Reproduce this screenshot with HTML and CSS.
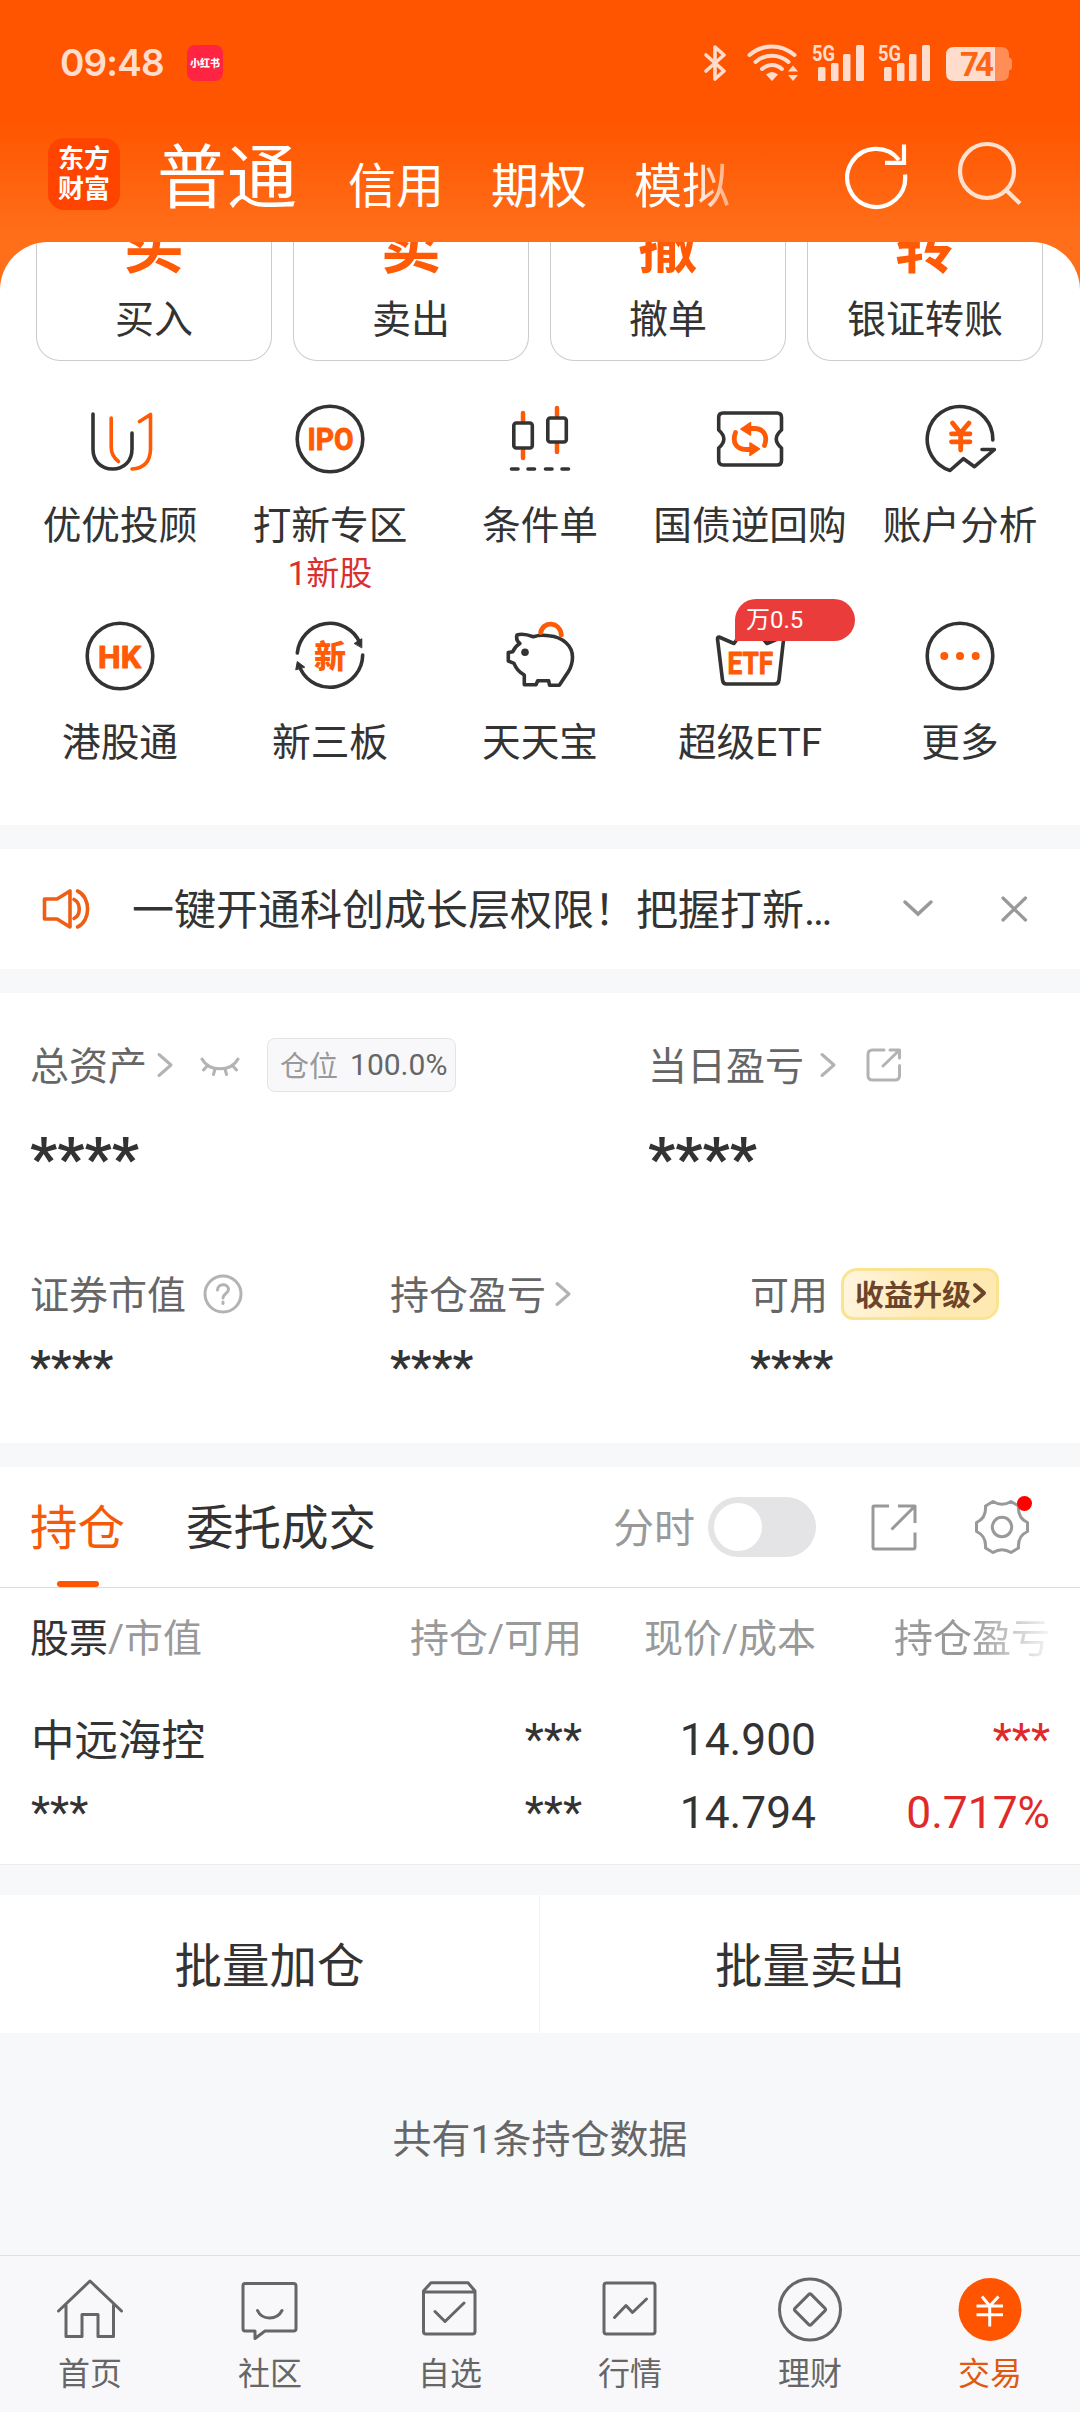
FILE: index.html
```html
<!DOCTYPE html>
<html lang="zh-CN">
<head>
<meta charset="utf-8">
<title>交易</title>
<link rel="stylesheet" href="styles.css">
</head>
<body>
<div class="screen">
  <header class="header">
    <div class="status">
      <span class="clock">09:48</span>
      <span class="note-app">小红书</span>
      <svg class="status-icons" width="320" height="40" viewBox="0 0 320 40">
        <g fill="none" stroke="#ffdccb" stroke-width="4" stroke-linecap="round" stroke-linejoin="round">
          <path d="M6 12 L24 28 L15 36 V4 L24 12 L6 28" stroke-width="3.600"/>
          <path d="M49.500 12 C63 0.500 81 0.500 94.500 12"/>
          <path d="M55.500 19 C65 10.500 79 10.500 88.500 19"/>
          <path d="M62 26 C68 20.500 76 20.500 82 26"/>
        </g>
        <g fill="#ffdccb">
          <path d="M72 38 L66 31.500 Q72 26.500 78 31.500 Z"/>
          <path d="M93 22.500 L98 28.500 H88 Z M93 38 L98 32 H88 Z"/>
          <text class="net" x="112" y="17.500" textLength="23" lengthAdjust="spacingAndGlyphs">5G</text>
          <rect x="118" y="24" width="7.500" height="14" rx="1.500"/>
          <rect x="131" y="20" width="7.500" height="18" rx="1.500"/>
          <rect x="143" y="11" width="7.500" height="27" rx="1.500"/>
          <rect x="156" y="2" width="8" height="36" rx="1.500"/>
          <text class="net" x="178" y="17.500" textLength="23" lengthAdjust="spacingAndGlyphs">5G</text>
          <rect x="184" y="24" width="7.500" height="14" rx="1.500"/>
          <rect x="197" y="20" width="7.500" height="18" rx="1.500"/>
          <rect x="209" y="11" width="7.500" height="27" rx="1.500"/>
          <rect x="222" y="2" width="8" height="36" rx="1.500"/>
          <path d="M254 4 H295 V38 H254 Q246 38 246 30 V12 Q246 4 254 4 Z"/>
        </g>
        <path d="M295 4 H301 Q309 4 309 12 V14.500 Q312 15 312 18 V24 Q312 27 309 27.500 V30 Q309 38 301 38 H295 Z" fill="#ff8d55"/>
        <text class="battery" x="260" y="32.500" textLength="34">74</text>
      </svg>
    </div>
    <div class="topbar">
      <div class="logo"><span>东方</span><span>财富</span></div>
      <nav class="modes">
        <span class="mode mode-active">普通</span>
        <span class="mode">信用</span>
        <span class="mode">期权</span>
        <span class="mode mode-fade">模拟</span>
      </nav>
      <svg class="refresh" width="72" height="72" viewBox="0 0 72 72" fill="none" stroke="#fff" stroke-width="4.200">
        <path d="M65 35.500 A29 29 0 1 1 59 21"/>
        <path d="M64 5.500 V23.800 H45"/>
      </svg>
      <svg class="search" width="72" height="72" viewBox="0 0 72 72" fill="none" stroke="#ffe1d0" stroke-width="4.200">
        <circle cx="34" cy="32" r="27"/>
        <path d="M52.500 50.500 L67 64.500"/>
      </svg>
    </div>
  </header>

  <div class="sheet">
    <section class="quick">
      <div class="cards">
        <div class="card"><b>买</b><span>买入</span></div>
        <div class="card"><b>卖</b><span>卖出</span></div>
        <div class="card"><b>撤</b><span>撤单</span></div>
        <div class="card"><b>转</b><span>银证转账</span></div>
      </div>
      <div class="tools">
        <div class="tool">
          <svg class="icon" viewBox="0 0 72 72">
            <path d="M9 11 V46 C9 58 17 66 28.500 66 C40 66 48 58 48 46 V30"/>
            <path class="hot" d="M27.200 15 V44 Q27.200 53 34.500 58.500 M55.500 18.500 L66.500 11.500 V46 Q66 65 48 66"/>
          </svg>
          <span>优优投顾</span>
        </div>
        <div class="tool">
          <svg class="icon" viewBox="0 0 72 72">
            <circle cx="36" cy="36" r="32.800"/>
            <text class="mark" x="13.500" y="47" textLength="46" lengthAdjust="spacingAndGlyphs">IPO</text>
          </svg>
          <span>打新专区</span><em>1新股</em>
        </div>
        <div class="tool">
          <svg class="icon" viewBox="0 0 72 72">
            <path class="hot candle" d="M19 10 V18 M19 47 V55 M53 5 V13 M53 41 V49"/>
            <rect x="9.800" y="20" width="18.500" height="25" rx="2.500"/>
            <rect x="43.800" y="15" width="18.500" height="24" rx="2.500"/>
            <path d="M7.500 66 H14 M24 66 H30.500 M41.500 66 H48 M58 66 H64.500"/>
          </svg>
          <span>条件单</span>
        </div>
        <div class="tool">
          <svg class="icon" viewBox="0 0 72 72">
            <path d="M9 10 H63 Q67.500 10 67.500 14.500 V27 Q57 36 67.500 45 V57.500 Q67.500 62 63 62 H9 Q4.700 62 4.700 57.500 V45 Q15 36 4.700 27 V14.500 Q4.700 10 9 10 Z"/>
            <path class="hot bold" d="M35 25.500 H40 C50 25.500 54 33 50.500 42.500 M37 46.500 H32 C22 46.500 18 39 21.500 29.500"/>
            <path class="solid" d="M27 26 L36.500 19.500 V32 Z M45.500 46 L36 40 V52.500 Z"/>
          </svg>
          <span>国债逆回购</span>
        </div>
        <div class="tool">
          <svg class="icon" viewBox="0 0 72 72">
            <path d="M68.800 37 A32.800 32.800 0 1 0 26 67.500 L39.500 55.700 L50.500 63.700 L70.500 46.500 H58"/>
            <path class="hot bold" d="M28.500 20 L36.500 30 L45 20 M27.500 30.800 H46 M27.500 38.800 H46 M36.700 30 V47"/>
          </svg>
          <span>账户分析</span>
        </div>
        <div class="tool">
          <svg class="icon" viewBox="0 0 72 72">
            <circle cx="36" cy="36" r="32.800"/>
            <text class="mark" x="14" y="47.500" textLength="43" lengthAdjust="spacingAndGlyphs">HK</text>
          </svg>
          <span>港股通</span>
        </div>
        <div class="tool">
          <svg class="icon" viewBox="0 0 72 72">
            <path d="M3.300 33 A32.800 32.800 0 0 1 66 23 M68.700 35 A32.800 32.800 0 0 1 6.500 49"/>
            <path class="head" d="M60.500 23.300 L67.800 18.700 V27.500 Z M1.800 49.500 L3.300 41.500 L10.500 47 Z"/>
            <text class="mark mark-cn" x="20" y="47.500">新</text>
          </svg>
          <span>新三板</span>
        </div>
        <div class="tool">
          <svg class="icon" viewBox="0 0 72 72">
            <path d="M13 15 Q19 13 29.300 16.700 Q36 14.500 45 15.700 C59 17 68.500 26 68.500 37 Q68.500 45 64.300 51.700 L55.300 65.300 H45.500 L44.700 60.700 H33.700 L32 64.700 H20.300 V55 Q13 51 10 43.300 L4.300 41 V32.500 L8.700 31.700 Q11 26.500 15.800 23.500 Q11.500 20 13 15 Z"/>
            <circle class="dark" cx="21" cy="32.300" r="3.800"/>
            <path class="hot bold" d="M36.700 12.500 C39 1 56 1 57.300 15"/>
          </svg>
          <span>天天宝</span>
        </div>
        <div class="tool">
          <svg class="icon" viewBox="0 0 72 72">
            <path d="M5 17 L20 23.500 L26 15 H46 L53 23.500 L68 17 Q69.500 18 69.500 20 L65 60 Q64.500 64 61 64 H12.500 Q9 64 8.500 60 L3.500 19 Q3.500 17 5 17 Z"/>
            <text class="mark" x="13.500" y="54" textLength="45.500" lengthAdjust="spacingAndGlyphs">ETF</text>
          </svg>
          <span>超级ETF</span>
          <i class="flag">万0.5</i>
        </div>
        <div class="tool">
          <svg class="icon" viewBox="0 0 72 72">
            <circle cx="36" cy="36" r="32.800"/>
            <path class="dots" d="M16.300 36 a4 4 0 1 0 8 0 a4 4 0 1 0 -8 0 M32 36 a4 4 0 1 0 8 0 a4 4 0 1 0 -8 0 M47.700 36 a4 4 0 1 0 8 0 a4 4 0 1 0 -8 0"/>
          </svg>
          <span>更多</span>
        </div>
      </div>
    </section>
  </div>

  <section class="notice">
    <svg width="50" height="46" viewBox="0 0 50 46" fill="none" stroke="#ee5e14" stroke-width="3.600" stroke-linecap="round" stroke-linejoin="round">
      <path d="M4.500 13 H17 L30 5 V41 L17 33 H4.500 Z"/>
      <path d="M34 13.500 C41 17 41 29 34 32.500 M37.500 5 C51 11 51 35 37.500 41"/>
    </svg>
    <p>一键开通科创成长层权限！把握打新…</p>
    <svg class="down" width="34" height="22" viewBox="0 0 34 22" fill="none" stroke="#999" stroke-width="3.500" stroke-linecap="round"><path d="M4 4 L17 16 L30 4"/></svg>
    <svg width="30" height="30" viewBox="0 0 30 30" fill="none" stroke="#999" stroke-width="3.200" stroke-linecap="round"><path d="M3 4 L25.500 26 M25.500 4 L3 26"/></svg>
  </section>

  <section class="assets">
    <div class="total">
      <div class="metric">
        <div class="label"><span>总资产</span><svg class="chev" width="18" height="26" viewBox="0 0 18 26"><path d="M3 2.500 L15 13 L3 23.500"/></svg>
          <svg class="eye" width="40" height="22" viewBox="0 0 40 22"><path d="M2 3 C9 16 31 16 38 3 M8 9 L3.500 14 M15 13 L13.500 18.500 M25 13 L26.500 18.500 M32 9 L36.500 14"/></svg>
          <div class="ratio">仓位<b>100.0%</b></div></div>
        <div class="stars-lg">****</div>
      </div>
      <div class="metric">
        <div class="label"><span>当日盈亏</span><svg class="chev chev-far" width="18" height="26" viewBox="0 0 18 26"><path d="M3 2.500 L15 13 L3 23.500"/></svg>
          <svg class="share" width="36" height="36" viewBox="0 0 36 36"><path d="M18 3 H6.500 Q2 3 2 7.500 V28.500 Q2 33 6.500 33 H29 Q33.500 33 33.500 28.500 V18.500 M24 3 H33.500 V11 M33 3.500 L17 19"/></svg></div>
        <div class="stars-lg">****</div>
      </div>
    </div>
    <div class="detail">
      <div class="metric">
        <div class="label"><span>证券市值</span><svg class="help" width="40" height="40" viewBox="0 0 40 40"><circle cx="20" cy="20" r="18"/><path d="M14.500 16 C14.500 9 25.500 9 25.500 15.500 C25.500 19.500 20 19.500 20 24 M20 28 V29.500"/></svg></div>
        <div class="stars">****</div>
      </div>
      <div class="metric">
        <div class="label"><span>持仓盈亏</span><svg class="chev chev-near" width="18" height="26" viewBox="0 0 18 26"><path d="M3 2.500 L15 13 L3 23.500"/></svg></div>
        <div class="stars">****</div>
      </div>
      <div class="metric">
        <div class="label"><span>可用</span><div class="upgrade">收益升级<svg width="15" height="22" viewBox="0 0 15 22"><path d="M3 3 L12 11 L3 19"/></svg></div></div>
        <div class="stars">****</div>
      </div>
    </div>
  </section>

  <section class="holdings">
    <div class="tabs">
      <span class="tab tab-active">持仓</span>
      <span class="tab">委托成交</span>
      <span class="switch-label">分时</span>
      <span class="switch"></span>
      <svg class="export" width="48" height="48" viewBox="0 0 48 48"><path d="M19 3 H4 Q3 3 3 4 V44 Q3 46 5 46 H43 Q45 46 45 44 V29.500 M28 3 H45 V20 M44.500 3.500 L21.500 26.500"/></svg>
      <div class="gear">
        <svg width="60" height="60" viewBox="0 0 60 60"><circle cx="30" cy="30" r="9.700"/><path d="M21 4.500 Q30 10 39 4.500 L46.500 9 Q45.500 21 55.500 25.500 V34.500 Q45.500 39 46.500 51 L39 55.500 Q30 50 21 55.500 L13.500 51 Q14.500 39 4.500 34.500 V25.500 Q14.500 21 13.500 9 Z"/></svg>
        <i></i>
      </div>
    </div>
    <div class="table">
      <div class="row head-row">
        <span><b>股票</b>/市值</span><span>持仓/可用</span><span>现价/成本</span><span class="fade">持仓盈亏</span>
      </div>
      <div class="row">
        <span class="name">中远海控</span><span>***</span><span>14.900</span><span class="up">***</span>
      </div>
      <div class="row">
        <span>***</span><span>***</span><span>14.794</span><span class="up">0.717%</span>
      </div>
    </div>
  </section>

  <section class="actions"><span>批量加仓</span><span>批量卖出</span></section>
  <p class="summary">共有1条持仓数据</p>

  <nav class="dock">
    <div class="dock-item"><svg viewBox="0 0 72 72"><path d="M4.500 37 L36 7 L67.500 37 M12 31 V62.500 H28 V40.500 H44 V62.500 H59.500 V31"/></svg><span>首页</span></div>
    <div class="dock-item"><svg viewBox="0 0 72 72"><path d="M11 9.500 H59.500 Q62 9.500 62 12 V54.500 Q62 57 59.500 57 H31 L21 64.500 V57 H11 Q9 57 9 54.500 V12 Q9 9.500 11 9.500 Z M23.500 36.500 C28 46.500 43 46.500 48 36.500"/></svg><span>社区</span></div>
    <div class="dock-item"><svg viewBox="0 0 72 72"><path d="M17 8.800 H54 L61 17 V57.500 Q61 60 58.500 60 H12 Q9.500 60 9.500 57.500 V17 Z M9.500 18 H61 M21 37.500 L31 47.500 L50 29"/></svg><span>自选</span></div>
    <div class="dock-item"><svg viewBox="0 0 72 72"><rect x="10" y="9" width="51" height="51" rx="2.500"/><path d="M20.500 43.500 L32 31.500 L38.500 38.500 L52.500 25"/></svg><span>行情</span></div>
    <div class="dock-item"><svg viewBox="0 0 72 72"><circle cx="36" cy="35.500" r="30.500"/><rect x="24.500" y="24" width="23" height="23" rx="2" transform="rotate(45 36 35.500)"/></svg><span>理财</span></div>
    <div class="dock-item dock-active"><svg viewBox="0 0 72 72"><circle cx="36" cy="35.500" r="31.500"/><path d="M28 22.500 L35.700 32 L44.500 22.500 M22.500 32 H49 M22.500 40.800 H49 M35.700 32 V52.500"/></svg><span>交易</span></div>
  </nav>
</div>
</body>
</html>
```

FILE: styles.css
```css
* { box-sizing: border-box; }

body {
  margin: 0;
  background: #f7f8fa;
  color: #333;
  font-family: Roboto, "Noto Sans CJK SC", sans-serif;
}

p { margin: 0; }

em, i { font-style: normal; }

svg { display: block; flex: none; }

.screen {
  width: 1080px;
  height: 2412px;
  display: flex;
  flex-direction: column;
  overflow: hidden;
}

/* Header */
.header {
  height: 242px;
  background: linear-gradient(#ff5500 50%, #ff6e19 96%);
}

.status {
  height: 124px;
  padding: 2px 60px 0 60px;
  display: flex;
  align-items: center;
  color: #ffdccb;
}

.clock {
  width: 127px;
  font: 600 37px/40px Inter, sans-serif;
  letter-spacing: -0.9px;
}

.note-app {
  width: 36px;
  height: 36px;
  border-radius: 8px;
  background: #ff2442;
  color: #fff;
  font: 900 10px/36px "Noto Sans CJK SC", sans-serif;
  text-align: center;
}

.status-icons { margin-left: 477px; }

.net { font: 700 22px Roboto, sans-serif; }

.battery { font: 700 33px Roboto, sans-serif; fill: #ff6414; }

.topbar {
  height: 118px;
  padding-left: 48px;
  display: flex;
  align-items: flex-start;
}

.logo {
  width: 72px;
  height: 72px;
  margin-top: 14px;
  padding-top: 6px;
  display: flex;
  flex-direction: column;
  align-items: center;
  border-radius: 16px;
  background: #ff4400;
  color: #fff;
  font-weight: 700;
  font-size: 26px;
  line-height: 30px;
}

.modes {
  width: 700px;
  margin: 19px 0 0 37px;
  display: flex;
  align-items: baseline;
  gap: 47px;
  color: #fff;
}

.mode { padding-top: 1px; font-size: 48px; line-height: 70px; }

.mode-active { margin-right: 4px; font-size: 70px; }

.mode-fade {
  -webkit-mask-image: linear-gradient(90deg, #000 60%, rgba(0, 0, 0, .45));
  mask-image: linear-gradient(90deg, #000 60%, rgba(0, 0, 0, .45));
}

.refresh { margin: 15px 0 0 -17px; }

.search { margin: 15px 0 0 41px; }

/* Quick actions */
.sheet { background: #ff6e19; }

.quick {
  height: 583px;
  overflow: hidden;
  border-radius: 48px 48px 0 0;
  background: #fff;
}

.cards {
  height: 119px;
  padding: 0 37px 0 36px;
  display: grid;
  grid-template-columns: repeat(4, 236px);
  justify-content: space-between;
}

.card {
  display: flex;
  flex-direction: column;
  align-items: center;
  overflow: hidden;
  border: 1px solid #ccc;
  border-top: 0;
  border-radius: 0 0 24px 24px;
  font-size: 39px;
  line-height: 40px;
}

.card b {
  margin: -24px 0 22px;
  color: #ff5a05;
  font-size: 60px;
  font-weight: 700;
  line-height: 60px;
}

.tools {
  margin: 42px 15px 0;
  display: grid;
  grid-template-columns: repeat(5, 210px);
  grid-auto-rows: 217px;
}

.tool {
  position: relative;
  display: flex;
  flex-direction: column;
  align-items: center;
  font-size: 38.7px;
  line-height: 40px;
  white-space: nowrap;
}

.tool em {
  margin-top: 11px;
  color: #d92f2f;
  font-size: 33px;
  line-height: 34px;
}

.icon {
  width: 72px;
  height: 72px;
  margin-bottom: 31px;
  fill: none;
  stroke: #333;
  stroke-width: 3.6;
  stroke-linecap: round;
  stroke-linejoin: round;
}

.icon .hot { stroke: #ff5a05; }

.icon .candle { stroke-width: 4.5; }

.icon .bold { stroke-width: 4.8; }

.icon .solid { fill: #ff5a05; stroke: #ff5a05; stroke-width: 1.5; }

.icon .dots { fill: #ff5a05; stroke: none; }

.icon .head { fill: #333; stroke-width: 1; }

.icon .dark { fill: #333; stroke: none; }

.mark {
  fill: #ff5a05;
  stroke: #ff5a05;
  stroke-width: 1;
  font: 700 32px Roboto, sans-serif;
}

.mark-cn { font: 900 32px "Noto Sans CJK SC", sans-serif; stroke: none; }

.flag {
  position: absolute;
  left: 90px;
  top: -21px;
  width: 120px;
  height: 42px;
  padding-left: 11px;
  border-radius: 21px 21px 21px 0;
  background: #eb3c3c;
  color: #fff;
  font-size: 24px;
  line-height: 43px;
}

/* Notice */
.notice {
  height: 120px;
  margin: 24px 0;
  padding: 0 50px 0 40px;
  display: flex;
  align-items: center;
  background: #fff;
}

.notice p {
  width: 769px;
  margin-left: 42px;
  padding-top: 4px;
  font-size: 42px;
  line-height: 50px;
  white-space: nowrap;
}

.notice .down { margin-right: 65px; }

/* Assets */
.assets { height: 450px; background: #fff; }

.total, .detail { display: grid; padding-left: 30px; }

.total {
  height: 224px;
  padding-top: 42px;
  grid-template-columns: 618px 1fr;
}

.detail { grid-template-columns: 360px 360px 1fr; padding-top: 47px; }

.label {
  height: 60px;
  display: flex;
  align-items: center;
  color: #666;
  font-size: 39px;
}

.label > span { padding-bottom: 5px; }

.label svg {
  fill: none;
  stroke: #b3b3b3;
  stroke-width: 3;
  stroke-linecap: round;
  stroke-linejoin: round;
}

.label .chev { margin-left: 9px; }
.label .chev-far { margin-left: 15px; }
.label .chev-near { margin-left: 8px; }
.label .eye { margin: 4px 0 0 26px; }
.label .share { margin-left: 29px; }
.label .help { margin-left: 17px; }

.ratio {
  height: 54px;
  width: 189px;
  margin-left: 27px;
  padding: 0 0 2px 12px;
  display: flex;
  align-items: center;
  gap: 12px;
  border: 1px solid #e4e4e7;
  border-radius: 8px;
  background: #f8f8fb;
  color: #999;
  font-size: 29px;
}

.ratio b { color: #666; font-size: 30px; font-weight: 400; }

.stars-lg {
  margin-top: 29px;
  font-size: 60px;
  font-weight: 700;
  line-height: 70px;
}

.stars {
  margin-top: 15px;
  font-size: 47px;
  font-weight: 500;
  line-height: 56px;
}

.upgrade {
  width: 158px;
  height: 52px;
  margin-left: 13px;
  padding: 0 0 2px 11px;
  display: flex;
  align-items: center;
  gap: 1px;
  border: 3px solid #fbe38f;
  border-radius: 16px 12px;
  background: linear-gradient(100deg, #fff6df, #ffe9b3 60%);
  color: #6b4429;
  font-size: 29px;
  font-weight: 700;
}

.label .upgrade svg { stroke: #6b4429; stroke-width: 4; }

/* Holdings */
.holdings {
  height: 398px;
  margin-top: 24px;
  border-bottom: 1px solid #ececee;
  background: #fff;
}

.tabs {
  height: 121px;
  padding-left: 30px;
  display: flex;
  align-items: center;
  border-bottom: 1px solid #dcdcde;
  font-size: 47.5px;
}

.tab {
  position: relative;
  height: 120px;
  margin-right: 61px;
  line-height: 125px;
}

.tab-active { color: #f55a0a; }

.tab-active::after {
  content: "";
  position: absolute;
  left: 27px;
  bottom: 0;
  width: 42px;
  height: 6px;
  border-radius: 3px;
  background: #ff5500;
}

.switch-label { margin-left: 176px; padding-bottom: 4px; color: #999; font-size: 41px; }

.switch {
  width: 108px;
  height: 60px;
  margin-left: 13px;
  padding: 6px;
  border-radius: 30px;
  background: #e4e4e6;
}

.switch::before {
  content: "";
  display: block;
  width: 48px;
  height: 48px;
  border-radius: 50%;
  background: #fff;
}

.export, .gear svg { fill: none; stroke: #999; stroke-width: 3; stroke-linejoin: round; }

.export { margin-left: 54px; }

.gear { position: relative; margin-left: 54px; }

.gear i {
  position: absolute;
  right: 0;
  top: -1px;
  width: 15px;
  height: 15px;
  border-radius: 50%;
  background: #f00;
}

.row {
  height: 73px;
  padding-left: 31px;
  display: grid;
  grid-template-columns: 341px 210px 234px 234px;
  align-items: center;
  font-size: 44.3px;
  text-align: right;
}

.row span:first-child { text-align: left; }

.head-row { height: 94px; margin-bottom: 21px; color: #999; font-size: 39px; }

.head-row b { color: #333; font-weight: 400; }

.head-row span:first-child { margin-left: -1px; }

.name { padding-bottom: 5px; font-size: 43.5px; }

.up { color: #e02a2a; }

.fade {
  -webkit-mask-image: linear-gradient(90deg, #000 66%, rgba(0, 0, 0, .1));
  mask-image: linear-gradient(90deg, #000 66%, rgba(0, 0, 0, .1));
}

/* Batch actions */
.actions {
  height: 138px;
  margin-top: 30px;
  display: grid;
  grid-template-columns: 539px 541px;
  background: #fff;
  font-size: 47.5px;
  line-height: 144px;
  text-align: center;
}

.actions span { height: 138px; }

.actions span + span { border-left: 1px solid #f3f4f6; }

.summary {
  height: 222px;
  padding-top: 84px;
  color: #666;
  font-size: 39px;
  line-height: 46px;
  text-align: center;
}

/* Bottom navigation */
.dock {
  height: 157px;
  padding-top: 18px;
  display: grid;
  grid-template-columns: repeat(6, 1fr);
  border-top: 1px solid #dde1e4;
  background: #f8f8fb;
}

.dock-item {
  display: flex;
  flex-direction: column;
  align-items: center;
  color: #666;
  font-size: 32px;
  line-height: 36px;
}

.dock-item svg {
  width: 72px;
  height: 72px;
  margin-bottom: 10px;
  fill: none;
  stroke: #666;
  stroke-width: 3;
  stroke-linecap: round;
  stroke-linejoin: round;
}

.dock-active { color: #e0590f; }

.dock-active svg { stroke: #fff; stroke-linecap: butt; }

.dock-active circle { fill: #ff5500; stroke: none; }
```
